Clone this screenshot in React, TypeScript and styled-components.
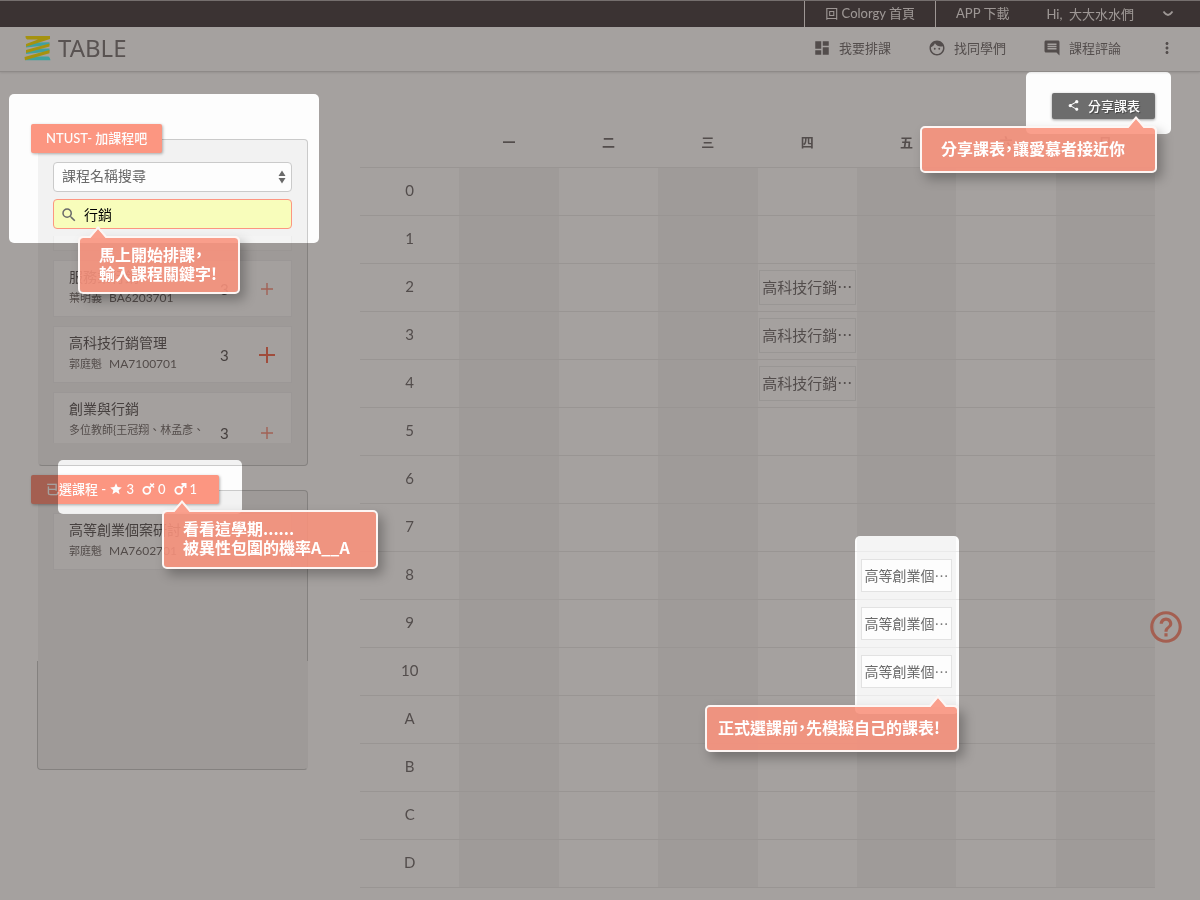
import React from 'react';
import styled, { createGlobalStyle } from 'styled-components';
import {
  MdDashboard,
  MdFace,
  MdComment,
  MdMoreVert,
  MdShare,
  MdSearch,
  MdHelpOutline,
  MdStar,
} from 'react-icons/md';

const CORAL = '#fe9782';

const GlobalStyle = createGlobalStyle`
  *, *::before, *::after { box-sizing: border-box; }
  body {
    margin: 0;
    background: #fff;
    font-family: Lato, 'Noto Sans CJK TC', sans-serif;
    font-size: 13px;
  }
  button, input, select { font-family: inherit; margin: 0; }
  a { color: inherit; text-decoration: none; }
`;

const Page = styled.div`
  position: relative;
  min-height: 100vh;
  overflow: hidden;
  background: #fff;
`;

/* ---------- top bars ---------- */

const TopBar = styled.div`
  display: flex;
  justify-content: flex-end;
  height: 27px;
  padding-right: 26px;
  border-top: 1px solid #b5b0b0;
  background: #5a5052;
  color: #f4f0ef;
  line-height: 24px;
`;

const TopLink = styled.a<{ $framed?: boolean }>`
  padding: 0 20px;
  border: solid #f4f0ef;
  border-width: ${(p) => (p.$framed ? '0 1px' : '0')};
  white-space: nowrap;
`;

const UserMenu = styled.button`
  display: flex;
  align-items: center;
  gap: 28px;
  padding: 0 0 2px 17px;
  border: 0;
  background: none;
  color: inherit;
  font-size: 13px;
`;

const Header = styled.header`
  display: flex;
  align-items: center;
  justify-content: space-between;
  height: 45px;
  padding: 0 24px 2px;
  border-bottom: 1px solid #dcdada;
  box-shadow: 0 1px 2px rgba(0, 0, 0, 0.1);
`;

const Brand = styled.a`
  display: flex;
  align-items: center;
  gap: 7px;
  color: #8a8383;
  font-family: 'Noto Sans', sans-serif;
  font-size: 24px;
  line-height: 24px;
`;

const Nav = styled.nav`
  display: flex;
  align-items: center;
  gap: 37px;
  color: #807a7a;
`;

const NavLink = styled.a`
  display: flex;
  align-items: center;
  gap: 8px;
  line-height: 18px;
  white-space: nowrap;
`;

const IconButton = styled.button`
  display: flex;
  padding: 0;
  border: 0;
  background: none;
  color: inherit;
`;

/* ---------- sidebar ---------- */

const Content = styled.div`
  display: flex;
`;

const Sidebar = styled.aside`
  display: flex;
  flex: 0 0 360px;
  flex-direction: column;
  gap: 9px;
  padding: 52px 52px 0 31px;
`;

const Section = styled.section`
  display: flex;
  flex-direction: column;
  align-items: flex-start;
`;

const SectionTag = styled.h2`
  display: flex;
  position: relative;
  z-index: 1;
  align-items: center;
  height: 29px;
  margin: 0 0 -14px;
  padding: 0 15px 2px;
  border-radius: 2px;
  background: ${CORAL};
  box-shadow: 1px 1px 3px rgba(0, 0, 0, 0.3);
  color: #fff;
  font-size: 13px;
  font-weight: 500;
  white-space: nowrap;
`;

const Stats = styled(SectionTag)`
  padding-right: 22px;
`;

const Stat = styled.span`
  display: flex;
  align-items: center;
  gap: 3px;
  margin-right: 8px;

  &:last-child { margin-right: 0; }
`;

const Panel = styled.div`
  align-self: stretch;
  margin-left: 7px;
  padding: 22px 15px 22px 14px;
  border: 1px solid #ccc;
  border-left-color: #f4f4f4;
  border-radius: 4px;
  background: #f4f4f4;
`;

const PanelTop = styled(Panel)`
  height: 171px;
  padding-bottom: 0;
  border-bottom: 0;
  border-radius: 4px 4px 0 0;
`;

const PanelBottom = styled(Panel)`
  height: 109px;
  margin-left: 6px;
  padding: 0;
  border-top: 0;
  border-right-color: #f4f4f4;
  border-left-color: #ccc;
  border-radius: 0 0 4px 4px;
`;

const Field = styled.label`
  display: block;
  position: relative;
  margin-bottom: 7px;
  color: #6b6b6b;

  svg { position: absolute; top: 7px; pointer-events: none; }
`;

const fieldBox = `
  display: block;
  width: 100%;
  height: 30px;
  border-radius: 4px;
  outline: 0;
  font-size: 14px;
`;

const Select = styled.select`
  ${fieldBox}
  padding: 0 8px 3px;
  border: 1px solid #ccc;
  appearance: none;
  background: #fff;
  color: #6b6b6b;
`;

const SearchInput = styled.input`
  ${fieldBox}
  padding: 0 8px 0 30px;
  border: 1px solid ${CORAL};
  background: #faffbd;
  color: #000;
`;

const SelectArrows = styled.svg`
  right: 5px;
`;

const SearchIcon = styled(MdSearch)`
  left: 7px;
`;

const Results = styled.ul`
  display: flex;
  flex-direction: column;
  gap: 9px;
  height: 207px;
  margin: 0;
  padding: 0;
  overflow: hidden;
  list-style: none;
`;

const ResultTail = styled.li`
  flex: 0 0 15px;
  border: 1px solid #eee;
  border-top: 0;
  background: #f6f6f6;
`;

const Course = styled.li<{ $tall?: boolean }>`
  display: flex;
  flex: 0 0 ${(p) => (p.$tall ? 81 : 57)}px;
  align-items: center;
  border: 1px solid #f0f0f0;
  background: #fefefe;
`;

const CourseInfo = styled.div`
  flex: 1;
  align-self: flex-start;
  min-width: 0;
  padding: 6px 0 0 15px;
  white-space: nowrap;
`;

const CourseName = styled.div`
  color: #6c6564;
  font-size: 14px;
  line-height: 20px;
`;

const CourseMeta = styled.div`
  color: #7f7775;
  font-size: 11px;
  line-height: 22px;
`;

const Code = styled.span`
  margin-left: 7px;
  font-size: 12px;
`;

const Credits = styled.span`
  width: 38px;
  color: #6c6564;
  font-size: 15px;
`;

const AddButton = styled(IconButton)`
  justify-content: center;
  width: 18px;
  margin-right: 15px;
`;

const ChosenList = styled.ul`
  display: flex;
  flex-direction: column;
  margin: 0;
  padding: 0;
  list-style: none;
`;

/* ---------- timetable ---------- */

const Main = styled.main`
  flex: 1;
  min-width: 0;
  padding: 21px 45px 12px 0;
`;

const Toolbar = styled.div`
  display: flex;
  justify-content: flex-end;
`;

const ShareButton = styled.button`
  display: flex;
  align-items: center;
  gap: 8px;
  height: 26px;
  padding: 0 15px 2px;
  border: 0;
  border-radius: 2px;
  background: #6e6e6e;
  box-shadow: 0 1px 3px rgba(0, 0, 0, 0.4);
  color: #fff;
  font-size: 13px;
  font-weight: 500;
  text-shadow: 1px 1px 1px rgba(0, 0, 0, 0.4);
  white-space: nowrap;
`;

const Timetable = styled.table`
  width: 100%;
  border-spacing: 0;
  table-layout: fixed;

  th, td {
    height: 48px;
    padding: 0;
    border-bottom: 1px solid #ececec;
    text-align: center;
    vertical-align: middle;
  }

  th { padding-bottom: 4px; }

  thead td { height: 49px; }

  tbody td:nth-child(even) { background: #f6f6f6; }
`;

const Day = styled.th`
  color: #807a7a;
  font-size: 13px;
  font-weight: 700;
`;

const Period = styled.th`
  color: #807a7a;
  font-size: 15px;
  font-weight: 400;
`;

const Slot = styled.a<{ $active?: boolean }>`
  display: block;
  height: ${(p) => (p.$active ? 33 : 35)}px;
  margin: 0 ${(p) => (p.$active ? 4 : 1)}px;
  border: 1px solid ${(p) => (p.$active ? '#e4e4e4' : '#ededed')};
  background: #fff;
  color: ${(p) => (p.$active ? '#6b6b6b' : '#807a7a')};
  font-size: ${(p) => (p.$active ? 14 : 15)}px;
  line-height: 32px;
  white-space: nowrap;
`;

const HelpButton = styled(IconButton)`
  position: absolute;
  top: 608px;
  right: 15px;
  color: ${CORAL};
`;

/* ---------- guided tour ---------- */

const Shade = styled.div`
  position: absolute;
  inset: 0;
  z-index: 2;
  background: #a5a19f;
  mix-blend-mode: multiply;
  pointer-events: none;
`;

type Place = { top: number; left?: number; right?: number; width: number; height: number };

const Spotlight = styled.div<{ $at: Place }>`
  position: absolute;
  top: ${(p) => p.$at.top}px;
  ${(p) => (p.$at.left !== undefined ? `left: ${p.$at.left}px;` : `right: ${p.$at.right}px;`)}
  width: ${(p) => p.$at.width}px;
  height: ${(p) => p.$at.height}px;
  border-radius: 5px;
  background: #fdfdfd;
`;

const Bubble = styled.div<{ $at: Place; $tight?: boolean }>`
  display: flex;
  position: absolute;
  z-index: 3;
  top: ${(p) => p.$at.top}px;
  ${(p) => (p.$at.left !== undefined ? `left: ${p.$at.left}px;` : `right: ${p.$at.right}px;`)}
  align-items: center;
  width: ${(p) => p.$at.width}px;
  height: ${(p) => p.$at.height}px;
  padding: 0 0 3px ${(p) => (p.$tight ? 11 : 19)}px;
  border: 2px solid #fdf6f4;
  border-radius: 5px;
  background: rgba(249, 146, 124, 0.88);
  background-clip: padding-box;
  box-shadow: 5px 6px 12px rgba(0, 0, 0, 0.28);
  color: #fff;
  font-family: 'Noto Sans CJK TC', sans-serif;
  font-feature-settings: 'halt';
  font-size: 16px;
  font-weight: 700;
  line-height: 19px;
  white-space: pre;
`;

const Pointer = styled.svg<{ $end?: boolean }>`
  position: absolute;
  top: -12px;
  ${(p) => (p.$end ? 'right: 9px;' : 'left: 8px;')}
`;

/* ---------- drawings ---------- */

const Logo = () => (
  <svg width="27" height="26" viewBox="0 0 27 26" aria-hidden="true">
    <path d="M2 10.500 12 7.500 25.500 7.200V10L2 12.500zM2 16.500 12 13.800 25.500 13.500V16.500L2 19zM7 21.500H24.500Q26 22 26.500 25.200H1z" fill="#62ffff" />
    <path d="M1.500 1H26V4L2 11.800V9L14 4.500H3Q1.200 4 1.500 1zM25.500 8.500V11.500L2 18V15zM25.500 15V18.300L1 25.200 .500 22z" fill="#ffe818" />
  </svg>
);

const Chevron = () => (
  <svg width="12" height="8" viewBox="0 0 12 8" fill="none" stroke="currentColor" strokeWidth="1.8" aria-hidden="true">
    <path d="M1.500 2.500C3 4.500 4.500 6 6 6S9 4.500 10.500 2.500" />
  </svg>
);

const Plus = ({ strong = false }: { strong?: boolean }) => {
  const size = strong ? 16 : 12;
  return (
    <svg width={size} height={size} viewBox={`0 0 ${size} ${size}`} aria-hidden="true">
      <path
        d={`M${size / 2} 0V${size}M0 ${size / 2}H${size}`}
        stroke={strong ? '#f87a60' : '#fa9a88'}
        strokeWidth={strong ? 2 : 1.4}
      />
    </svg>
  );
};

const Male = ({ crossed = false }: { crossed?: boolean }) => (
  <svg width="13" height="12" viewBox="0 0 13 12" fill="none" stroke="currentColor" strokeWidth="1.8" aria-hidden="true">
    <circle cx="4.800" cy="7.300" r="3.500" />
    {crossed ? (
      <path d="M7.200 4.900 12 .6M8.200 .6 12 4.600" strokeWidth="1.500" />
    ) : (
      <path d="M7.300 4.800 11.300 1M7.500 1H11.600V5" />
    )}
  </svg>
);

const BubblePointer = ({ end }: { end?: boolean }) => (
  <Pointer $end={end} width="20" height="12" viewBox="0 0 20 12" aria-hidden="true">
    <path d="M2 12 10 2.500 18 12z" fill="#faa08d" />
    <path d="M1.500 11.500 10 1.500 18.500 11.500" fill="none" stroke="#fdf6f4" strokeWidth="2" />
  </Pointer>
);

/* ---------- data ---------- */

const DAYS = ['一', '二', '三', '四', '五', '六', '日'];
const PERIODS = ['0', '1', '2', '3', '4', '5', '6', '7', '8', '9', '10', 'A', 'B', 'C', 'D'];

const SLOTS: Record<string, { name: string; active?: boolean }> = {
  '四2': { name: '高科技行銷⋯' },
  '四3': { name: '高科技行銷⋯' },
  '四4': { name: '高科技行銷⋯' },
  '五8': { name: '高等創業個⋯', active: true },
  '五9': { name: '高等創業個⋯', active: true },
  '五10': { name: '高等創業個⋯', active: true },
};

const RESULTS = [
  { name: '服務業行銷', teacher: '葉明義', code: 'BA6203701' },
  { name: '高科技行銷管理', teacher: '郭庭魁', code: 'MA7100701', strong: true },
  { name: '創業與行銷', teacher: '多位教師{王冠翔、林孟彥、', code: '', tall: true },
];

const SPOTLIGHTS: Place[] = [
  { top: 94, left: 9, width: 310, height: 149 },
  { top: 460, left: 58, width: 184, height: 54 },
  { top: 72, right: 29, width: 145, height: 62 },
  { top: 536, right: 241, width: 104, height: 178 },
];

const BUBBLES: { at: Place; text: string; end?: boolean; tight?: boolean }[] = [
  { at: { top: 236, left: 78, width: 162, height: 58 }, text: '馬上開始排課，\n輸入課程關鍵字!' },
  { at: { top: 510, left: 162, width: 216, height: 59 }, text: '看看這學期......\n被異性包圍的機率A__A' },
  { at: { top: 126, right: 43, width: 237, height: 47 }, text: '分享課表，讓愛慕者接近你', end: true },
  { at: { top: 705, right: 241, width: 254, height: 47 }, text: '正式選課前，先模擬自己的課表!', end: true, tight: true },
];

export default function App() {
  return (
    <Page>
      <GlobalStyle />
      <TopBar>
        <TopLink href="#home" $framed>回 Colorgy 首頁</TopLink>
        <TopLink href="#app">APP 下載</TopLink>
        <UserMenu type="button">
          Hi,&nbsp; 大大水水們
          <Chevron />
        </UserMenu>
      </TopBar>

      <Header>
        <Brand href="#table">
          <Logo />
          TABLE
        </Brand>
        <Nav>
          <NavLink href="#plan"><MdDashboard size={18} />我要排課</NavLink>
          <NavLink href="#mates"><MdFace size={18} />找同學們</NavLink>
          <NavLink href="#reviews"><MdComment size={18} />課程評論</NavLink>
          <IconButton type="button" aria-label="更多"><MdMoreVert size={18} /></IconButton>
        </Nav>
      </Header>

      <Content>
        <Sidebar>
          <Section>
            <SectionTag>NTUST- 加課程吧</SectionTag>
            <Panel>
              <Field>
                <Select aria-label="搜尋方式">
                  <option>課程名稱搜尋</option>
                </Select>
                <SelectArrows width="10" height="16" viewBox="0 0 10 16" aria-hidden="true">
                  <path d="M5 1.500 8.500 7H1.500zM5 14.500 8.500 9H1.500z" fill="currentColor" />
                </SelectArrows>
              </Field>
              <Field>
                <SearchInput type="text" aria-label="搜尋" defaultValue="行銷" />
                <SearchIcon size={18} />
              </Field>
              <Results>
                <ResultTail />
                {RESULTS.map((c) => (
                  <Course key={c.name} $tall={c.tall}>
                    <CourseInfo>
                      <CourseName>{c.name}</CourseName>
                      <CourseMeta>{c.teacher}<Code>{c.code}</Code></CourseMeta>
                    </CourseInfo>
                    <Credits>3</Credits>
                    <AddButton type="button" aria-label="加入"><Plus strong={c.strong} /></AddButton>
                  </Course>
                ))}
              </Results>
            </Panel>
          </Section>

          <Section>
            <Stats>
              已選課程 -&nbsp;
              <Stat><MdStar size={14} />3</Stat>
              <Stat><Male crossed />0</Stat>
              <Stat><Male />1</Stat>
            </Stats>
            <PanelTop>
              <ChosenList>
                <Course>
                  <CourseInfo>
                    <CourseName>高等創業個案研討</CourseName>
                    <CourseMeta>郭庭魁<Code>MA7602701</Code></CourseMeta>
                  </CourseInfo>
                </Course>
              </ChosenList>
            </PanelTop>
            <PanelBottom />
          </Section>
        </Sidebar>

        <Main>
          <Toolbar>
            <ShareButton type="button"><MdShare size={13} />分享課表</ShareButton>
          </Toolbar>
          <Timetable>
            <thead>
              <tr>
                <td />
                {DAYS.map((d) => <Day key={d} scope="col">{d}</Day>)}
              </tr>
            </thead>
            <tbody>
              {PERIODS.map((p) => (
                <tr key={p}>
                  <Period scope="row">{p}</Period>
                  {DAYS.map((d) => {
                    const slot = SLOTS[d + p];
                    return (
                      <td key={d}>
                        {slot && <Slot href="#course" $active={slot.active}>{slot.name}</Slot>}
                      </td>
                    );
                  })}
                </tr>
              ))}
            </tbody>
          </Timetable>
        </Main>
      </Content>

      <HelpButton type="button" aria-label="說明"><MdHelpOutline size={38} /></HelpButton>

      <Shade>
        {SPOTLIGHTS.map((s) => <Spotlight key={s.top} $at={s} />)}
      </Shade>
      {BUBBLES.map((b) => (
        <Bubble key={b.text} $at={b.at} $tight={b.tight}>
          <BubblePointer end={b.end} />
          {b.text}
        </Bubble>
      ))}
    </Page>
  );
}
